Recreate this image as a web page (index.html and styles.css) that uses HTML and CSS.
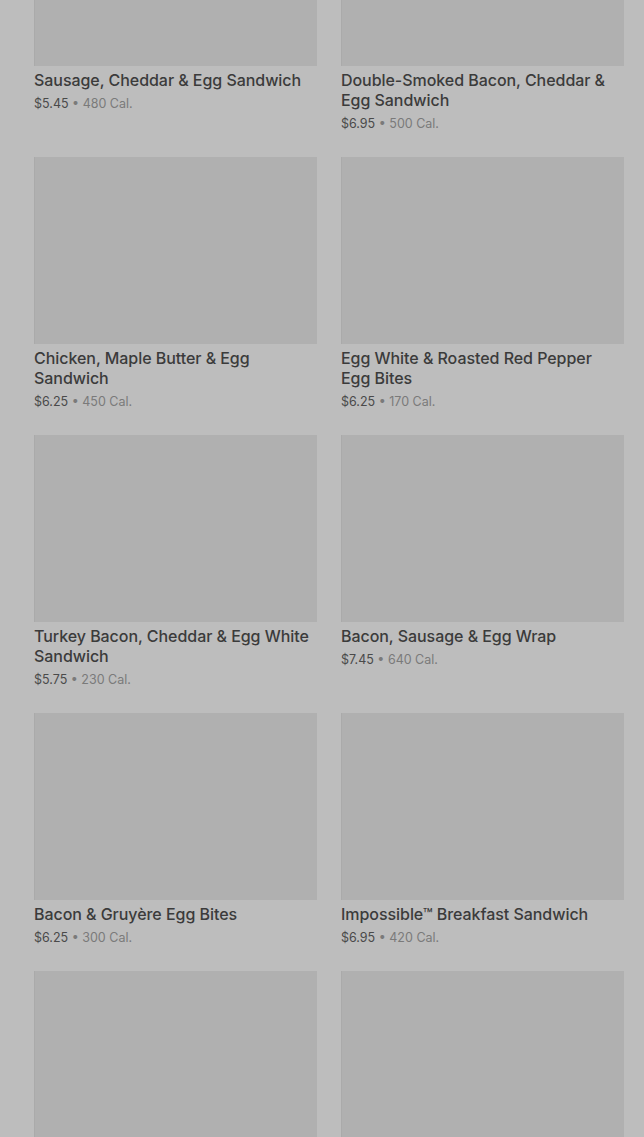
FILE: index.html
```html
<!DOCTYPE html>
<html lang="en">
  <head>
    <meta charset="UTF-8" />
    <meta name="viewport" content="width=device-width, initial-scale=1.0" />
    <title>Breakfast Menu</title>
    <link rel="stylesheet" href="styles.css">
  </head>
  <body>
    <div class="menu-grid">
      <div class="item">
        <div class="thumb"></div>
        <h3 class="name">Sausage, Cheddar &amp; Egg Sandwich</h3>
        <p class="meta"><span class="price">$5.45</span> • 480 Cal.</p>
      </div>
      <div class="item">
        <div class="thumb"></div>
        <h3 class="name">Double-Smoked Bacon, Cheddar &amp; Egg Sandwich</h3>
        <p class="meta"><span class="price">$6.95</span> • 500 Cal.</p>
      </div>
      <div class="item">
        <div class="thumb"></div>
        <h3 class="name">Chicken, Maple Butter &amp; Egg Sandwich</h3>
        <p class="meta"><span class="price">$6.25</span> • 450 Cal.</p>
      </div>
      <div class="item">
        <div class="thumb"></div>
        <h3 class="name">Egg White &amp; Roasted Red Pepper Egg Bites</h3>
        <p class="meta"><span class="price">$6.25</span> • 170 Cal.</p>
      </div>
      <div class="item">
        <div class="thumb"></div>
        <h3 class="name">Turkey Bacon, Cheddar &amp; Egg White Sandwich</h3>
        <p class="meta"><span class="price">$5.75</span> • 230 Cal.</p>
      </div>
      <div class="item">
        <div class="thumb"></div>
        <h3 class="name">Bacon, Sausage &amp; Egg Wrap</h3>
        <p class="meta"><span class="price">$7.45</span> • 640 Cal.</p>
      </div>
      <div class="item">
        <div class="thumb"></div>
        <h3 class="name">Bacon &amp; Gruyère Egg Bites</h3>
        <p class="meta"><span class="price">$6.25</span> • 300 Cal.</p>
      </div>
      <div class="item">
        <div class="thumb"></div>
        <h3 class="name">Impossible™ Breakfast Sandwich</h3>
        <p class="meta"><span class="price">$6.95</span> • 420 Cal.</p>
      </div>
      <div class="item">
        <div class="thumb"></div>
      </div>
      <div class="item">
        <div class="thumb"></div>
      </div>
    </div>
  </body>
</html>
```

FILE: styles.css
```css
* {
  margin: 0;
  padding: 0;
  box-sizing: border-box;
}
body {
  background-color: #bdbdbd;
  font-family: Inter, Roboto, sans-serif;
  overflow: hidden;
}

.menu-grid {
  display: grid;
  grid-template-columns: 283px 283px;
  column-gap: 24px;
  padding: 0 20px 0 34px;
  margin-top: -121px;
}

.item {
  padding-bottom: 23px;
}

.thumb {
  height: 187px;
  background-color: #b0b0b0;
  border-left: 1px solid #aaaaaa;
}

.name {
  margin-top: 4px;
  font-size: 16px;
  font-weight: 500;
  line-height: 20px;
  letter-spacing: -0.05px;
  color: #3b3b3b;
}

.meta {
  margin-top: 4px;
  font-size: 12.5px;
  line-height: 20px;
  color: #7a7a7a;
}

.price {
  color: #4a4a4a;
}
```
